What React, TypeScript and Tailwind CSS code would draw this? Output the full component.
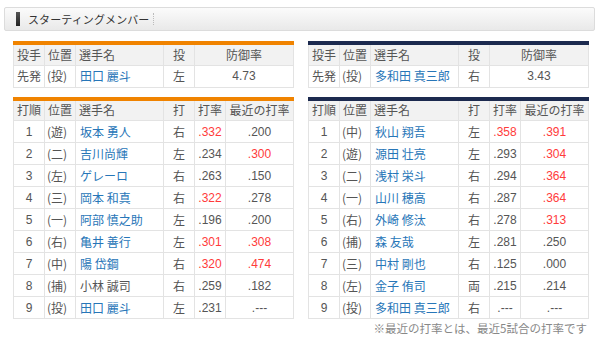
import React from 'react';

type Row = { no: string; pos: string; name: string; hand: string; avg: string; recent: string; avgRed?: boolean; recentRed?: boolean; visited?: boolean };

const giants: Row[] = [
  { no: '1', pos: '(遊)', name: '坂本 勇人', hand: '右', avg: '.332', recent: '.200', avgRed: true },
  { no: '2', pos: '(二)', name: '吉川尚輝', hand: '左', avg: '.234', recent: '.300', recentRed: true },
  { no: '3', pos: '(左)', name: 'ゲレーロ', hand: '右', avg: '.263', recent: '.150' },
  { no: '4', pos: '(三)', name: '岡本 和真', hand: '右', avg: '.322', recent: '.278', avgRed: true },
  { no: '5', pos: '(一)', name: '阿部 慎之助', hand: '左', avg: '.196', recent: '.200' },
  { no: '6', pos: '(右)', name: '亀井 善行', hand: '左', avg: '.301', recent: '.308', avgRed: true, recentRed: true },
  { no: '7', pos: '(中)', name: '陽 岱鋼', hand: '右', avg: '.320', recent: '.474', avgRed: true, recentRed: true },
  { no: '8', pos: '(捕)', name: '小林 誠司', hand: '右', avg: '.259', recent: '.182', visited: true },
  { no: '9', pos: '(投)', name: '田口 麗斗', hand: '左', avg: '.231', recent: '.---' },
];

const lions: Row[] = [
  { no: '1', pos: '(中)', name: '秋山 翔吾', hand: '左', avg: '.358', recent: '.391', avgRed: true, recentRed: true },
  { no: '2', pos: '(遊)', name: '源田 壮亮', hand: '左', avg: '.293', recent: '.304', recentRed: true },
  { no: '3', pos: '(二)', name: '浅村 栄斗', hand: '右', avg: '.294', recent: '.364', recentRed: true },
  { no: '4', pos: '(一)', name: '山川 穂高', hand: '右', avg: '.287', recent: '.364', recentRed: true },
  { no: '5', pos: '(右)', name: '外崎 修汰', hand: '右', avg: '.278', recent: '.313', recentRed: true },
  { no: '6', pos: '(捕)', name: '森 友哉', hand: '左', avg: '.281', recent: '.250' },
  { no: '7', pos: '(三)', name: '中村 剛也', hand: '右', avg: '.125', recent: '.000' },
  { no: '8', pos: '(左)', name: '金子 侑司', hand: '両', avg: '.215', recent: '.214' },
  { no: '9', pos: '(投)', name: '多和田 真三郎', hand: '右', avg: '.---', recent: '.---' },
];

const th = 'border border-[#e3e3e3] font-normal text-[#555] text-[12px]';
const td = 'border border-[#e3e3e3] text-[12px] text-[#555]';
const num = 'font-["Liberation_Sans",Arial,sans-serif] text-[11px]';

function Cols() {
  return (
    <colgroup>
      <col className="w-[31px]" />
      <col className="w-[31px]" />
      <col className="w-[88px]" />
      <col className="w-[31px]" />
      <col className="w-[31px]" />
      <col className="w-[68px]" />
    </colgroup>
  );
}

function PitcherTable({ bar, name, hand, era }: { bar: string; name: string; hand: string; era: string }) {
  return (
    <table className={`w-[280px] table-fixed border-collapse border-t-4 ${bar}`}>
      <Cols />
      <thead>
        <tr className="h-[22px] bg-[#f2f2f2]">
          <th className={`${th} text-left pl-[3px]`}>投手</th>
          <th className={`${th} text-left pl-[3px]`}>位置</th>
          <th className={`${th} text-left pl-[3px]`}>選手名</th>
          <th className={`${th} text-center`}>投</th>
          <th className={`${th} text-center`} colSpan={2}>防御率</th>
        </tr>
      </thead>
      <tbody>
        <tr className="h-[22px]">
          <td className={`${td} pl-[3px]`}>先発</td>
          <td className={`${td} pl-[2px]`}>(投)</td>
          <td className={`${td} pl-[4px] text-[#2776b8]`}>{name}</td>
          <td className={`${td} text-center`}>{hand}</td>
          <td className={`${td} ${num} text-center`} colSpan={2}>{era}</td>
        </tr>
      </tbody>
    </table>
  );
}

function LineupTable({ bar, rows }: { bar: string; rows: Row[] }) {
  return (
    <table className={`w-[280px] table-fixed border-collapse border-t-4 ${bar}`}>
      <Cols />
      <thead>
        <tr className="h-[22px] bg-[#f2f2f2]">
          <th className={`${th} text-left pl-[3px]`}>打順</th>
          <th className={`${th} text-left pl-[3px]`}>位置</th>
          <th className={`${th} text-left pl-[3px]`}>選手名</th>
          <th className={`${th} text-center`}>打</th>
          <th className={`${th} text-center`}>打率</th>
          <th className={`${th} text-center`}>最近の打率</th>
        </tr>
      </thead>
      <tbody>
        {rows.map((r) => (
          <tr key={r.no} className="h-[22px]">
            <td className={`${td} ${num} text-center`}>{r.no}</td>
            <td className={`${td} pl-[2px]`}>{r.pos}</td>
            <td className={`${td} pl-[4px] ${r.visited ? 'text-[#6b3fa0]' : 'text-[#2776b8]'}`}>{r.name}</td>
            <td className={`${td} text-center`}>{r.hand}</td>
            <td className={`${td} ${num} text-center ${r.avgRed ? 'text-[#ff3b3b]' : ''}`}>{r.avg}</td>
            <td className={`${td} ${num} text-center ${r.recentRed ? 'text-[#ff3b3b]' : ''}`}>{r.recent}</td>
          </tr>
        ))}
      </tbody>
    </table>
  );
}

export default function App() {
  return (
    <div className='w-[600px] h-[354px] bg-white pt-[7px] font-["Noto_Sans_CJK_JP","Noto_Sans",sans-serif] leading-none overflow-hidden'>
      {/* title bar */}
      <div className="ml-[4px] w-[591px] h-[24px] rounded-[2px] border border-[#dcdcdc] bg-gradient-to-b from-[#fbfbfb] to-[#e9e9e9] flex items-center">
        <div className="ml-[11px] w-[4px] h-[14px] bg-gradient-to-b from-[#555] to-[#222]" />
        <span className="ml-[8px] text-[11px] text-[#333] tracking-[0.1px]">スターティングメンバー</span>
        <div className="ml-[4px] h-[12px] border-l border-dotted border-[#bbb]" />
      </div>

      <div className="flex gap-[14px] px-[13px] mt-[10px]">
        <div className="flex flex-col gap-[9px]">
          <PitcherTable bar="border-t-[#f08300]" name="田口 麗斗" hand="左" era="4.73" />
          <LineupTable bar="border-t-[#f08300]" rows={giants} />
        </div>
        <div className="flex flex-col gap-[9px]">
          <PitcherTable bar="border-t-[#1c2a4f]" name="多和田 真三郎" hand="右" era="3.43" />
          <LineupTable bar="border-t-[#1c2a4f]" rows={lions} />
        </div>
      </div>

      <div className="mt-[4px] pr-[13px] text-right text-[11.5px] text-[#888]">※最近の打率とは、最近5試合の打率です</div>
    </div>
  );
}
